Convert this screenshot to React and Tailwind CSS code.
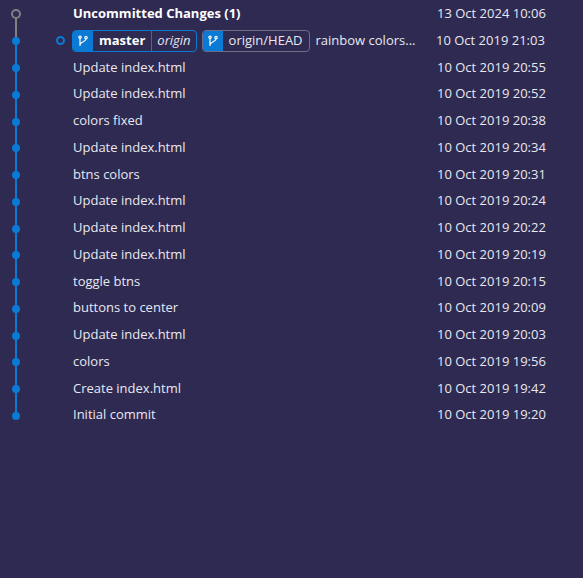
import React from "react";

const rows = [
  ["Update index.html", "10 Oct 2019 20:55"],
  ["Update index.html", "10 Oct 2019 20:52"],
  ["colors fixed", "10 Oct 2019 20:38"],
  ["Update index.html", "10 Oct 2019 20:34"],
  ["btns colors", "10 Oct 2019 20:31"],
  ["Update index.html", "10 Oct 2019 20:24"],
  ["Update index.html", "10 Oct 2019 20:22"],
  ["Update index.html", "10 Oct 2019 20:19"],
  ["toggle btns", "10 Oct 2019 20:15"],
  ["buttons to center", "10 Oct 2019 20:09"],
  ["Update index.html", "10 Oct 2019 20:03"],
  ["colors", "10 Oct 2019 19:56"],
  ["Create index.html", "10 Oct 2019 19:42"],
  ["Initial commit", "10 Oct 2019 19:20"],
];

const BranchIcon = () => (
  <svg width="12" height="12" viewBox="0 0 16 16" fill="none" stroke="white" strokeWidth="1.6" strokeLinecap="round">
    <circle cx="4" cy="3" r="1.6" />
    <circle cx="12" cy="3.5" r="1.6" />
    <path d="M4 4.6V14M12 5.1c0 4-6.5 3.5-8 7.5" />
  </svg>
);

const Graph = ({ i, last }) => (
  <div className="relative w-[32px] h-full shrink-0">
    {i === 0 ? (
      <>
        <div className="absolute left-[15px] top-[14px] bottom-0 w-[2px] bg-[#808080]" />
        <div className="absolute left-[11px] top-[9px] w-[10px] h-[10px] rounded-full border-2 border-[#808080] bg-[#2e2a52]" />
      </>
    ) : (
      <>
        <div className={`absolute left-[15px] w-[2px] bg-[#0a7ad5] top-0 ${last ? "h-[14px]" : "bottom-0"}`} />
        {i === 1 && <div className="absolute left-[15px] top-0 h-[14px] w-[2px] bg-[#808080]" />}
        <div className="absolute left-[12px] top-[10px] w-[8px] h-[8px] rounded-full bg-[#0a7ad5]" />
      </>
    )}
  </div>
);

export default function App() {
  return (
    <div className="w-[583px] h-[578px] bg-[#2e2a52] text-[#e8e8f0] text-[13px] pt-[0px] overflow-hidden" style={{ fontFamily: '"Open Sans", "Liberation Sans", sans-serif' }}>
      <div className="flex h-[27px] items-stretch">
        <Graph i={0} />
        <div className="pl-[41px] w-[405px] flex items-center font-bold text-white">Uncommitted Changes (1)</div>
        <div className="flex items-center">13 Oct 2024 10:06</div>
      </div>
      <div className="flex h-[27px] items-stretch">
        <Graph i={1} />
        <div className="pl-[41px] w-[405px] flex items-center gap-[5px] overflow-hidden whitespace-nowrap -ml-[1px]">
          <div className="-ml-[16px] w-[9px] h-[9px] rounded-full border-2 border-[#0a7ad5] mr-[2px]" />
          <div className="flex items-stretch h-[22px] rounded-[4px] border border-[#0a7ad5] overflow-hidden">
            <div className="bg-[#0a7ad5] w-[20px] flex items-center justify-center"><BranchIcon /></div>
            <div className="px-[6px] flex items-center font-bold text-white">master</div>
            <div className="border-l border-[#0a7ad5] px-[5px] flex items-center italic">origin</div>
          </div>
          <div className="flex items-stretch h-[22px] rounded-[4px] border border-[#6e6e8a] overflow-hidden">
            <div className="bg-[#0a7ad5] w-[20px] flex items-center justify-center"><BranchIcon /></div>
            <div className="px-[6px] flex items-center">origin/HEAD</div>
          </div>
          <span className="ml-[1px]">rainbow colors...</span>
        </div>
        <div className="flex items-center">10 Oct 2019 21:03</div>
      </div>
      {rows.map(([m, d], i) => (
        <div key={i} className="flex h-[26.75px] items-stretch">
          <Graph i={i + 2} last={i === rows.length - 1} />
          <div className="pl-[41px] w-[405px] flex items-center">{m}</div>
          <div className="flex items-center">{d}</div>
        </div>
      ))}
    </div>
  );
}
